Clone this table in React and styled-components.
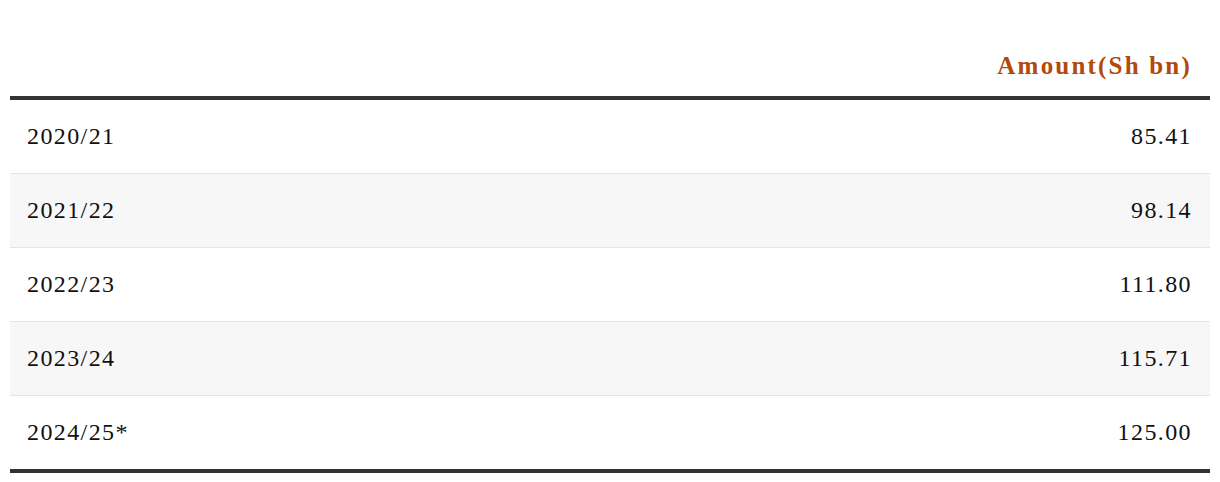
import React from 'react';
import styled, { createGlobalStyle } from 'styled-components';

const GlobalStyle = createGlobalStyle`
  body {
    margin: 0;
    background: #ffffff;
    font-family: 'Liberation Serif', 'Times New Roman', serif;
  }
`;

// UI COMPONENTS
const Wrapper = styled.div`
  padding: 0 10px;
`;

const Table = styled.table`
  width: 100%;
  border-collapse: collapse;
  border-bottom: 4px solid #333333;
`;

const HeadCell = styled.th`
  height: 80px;
  padding: 0 18px 16px;
  vertical-align: bottom;
  text-align: ${(p) => (p.$align === 'right' ? 'right' : 'left')};
  color: #b3490b;
  font-size: 25px;
  font-weight: 700;
  letter-spacing: 2.2px;
  border-bottom: 4px solid #333333;
`;

const Row = styled.tr`
  background: ${(p) => (p.$striped ? '#f7f7f7' : '#ffffff')};
  border-top: 1px solid #e5e5e5;

  &:first-child {
    border-top: none;
  }
`;

const Cell = styled.td`
  height: 73px;
  padding: 0 18px 0 17px;
  text-align: ${(p) => (p.$align === 'right' ? 'right' : 'left')};
  color: #111111;
  font-size: 24px;
  letter-spacing: 1.4px;
  vertical-align: middle;
`;

// UI DATA
const rows = [
  { id: 1, year: '2020/21', amount: '85.41' },
  { id: 2, year: '2021/22', amount: '98.14' },
  { id: 3, year: '2022/23', amount: '111.80' },
  { id: 4, year: '2023/24', amount: '115.71' },
  { id: 5, year: '2024/25*', amount: '125.00' },
];

function App() {
  return (
    <Wrapper>
      <GlobalStyle />
      <Table>
        <thead>
          <tr>
            <HeadCell />
            <HeadCell $align='right'>Amount(Sh bn)</HeadCell>
          </tr>
        </thead>
        <tbody>
          {rows.map((row, i) => (
            <Row key={row.id} $striped={i % 2 === 1}>
              <Cell>{row.year}</Cell>
              <Cell $align='right'>{row.amount}</Cell>
            </Row>
          ))}
        </tbody>
      </Table>
    </Wrapper>
  );
}

export default App;
